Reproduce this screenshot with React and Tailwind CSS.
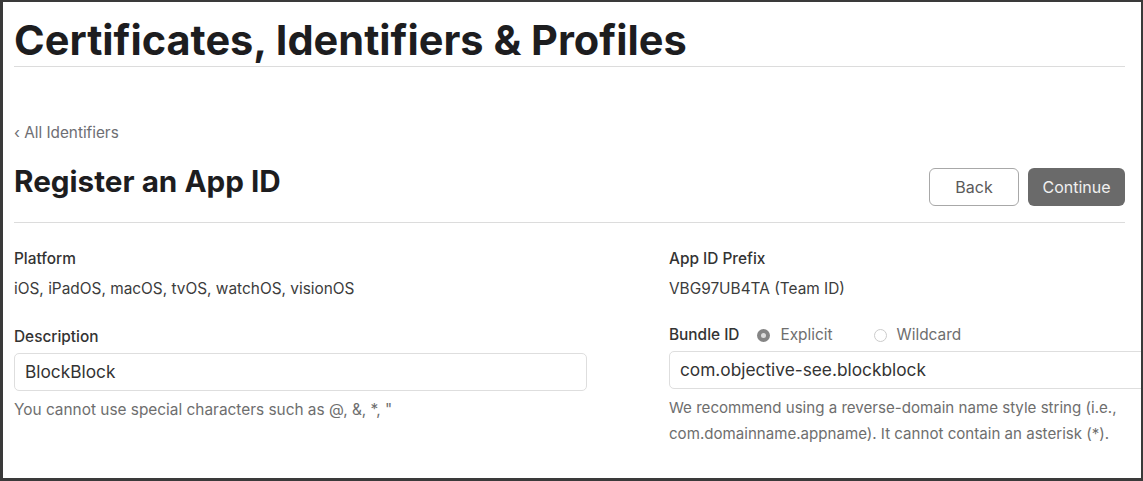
export default function App() {
  return (
    <div className="w-[1143px] h-[481px] bg-white overflow-hidden" style={{ fontFamily: "Inter, 'Noto Sans', sans-serif" }}>
      <div className="w-full h-full border-[3px] border-t-2 border-r-2 border-[#3a3a3a] overflow-hidden">
        <div className="w-[1240px] pl-[11px] pt-[14px]">
          <div className="w-[1111px]">
            <h1 className="text-[41.5px] leading-[48px] font-bold text-[#1d1d1f]">
              Certificates, Identifiers &amp; Profiles
            </h1>
            <div className="mt-[2px] border-t border-[#dcdcdc]" />

            <div className="mt-[56px] text-[15.3px] leading-[20px] text-[#6e6e73]">‹ All Identifiers</div>

            <div className="mt-[19px] flex items-start justify-between">
              <h2 className="text-[29.7px] leading-[38px] font-bold text-[#1d1d1f]">Register an App ID</h2>
              <div className="flex gap-[9px] mt-[6px]">
                <button className="w-[90px] h-[38px] rounded-[6px] border border-[#a8a8a8] bg-white text-[16px] text-[#5a5a5a]">
                  Back
                </button>
                <button className="w-[97px] h-[38px] rounded-[6px] bg-[#6a6a6a] text-[16px] text-[#f0f0f0]">
                  Continue
                </button>
              </div>
            </div>
            <div className="mt-[16px] border-t border-[#dcdcdc]" />
          </div>

          <div className="mt-[25px] grid grid-cols-[573px_573px] gap-x-[82px]">
            <div>
              <div className="text-[15.4px] leading-[22px] font-medium text-[#333]">Platform</div>
              <div className="mt-[8px] text-[15.4px] leading-[22px] text-[#3c3c3c]">
                iOS, iPadOS, macOS, tvOS, watchOS, visionOS
              </div>
              <div className="mt-[26px] text-[15.4px] leading-[22px] font-medium text-[#333]">Description</div>
              <div className="mt-[5px] h-[38px] rounded-[5px] border border-[#dedede] px-[10px] flex items-center text-[17.3px] text-[#333]">
                BlockBlock
              </div>
              <div className="mt-[8px] text-[15.4px] leading-[22px] text-[#6e6e6e]">
                You cannot use special characters such as @, &amp;, *, "
              </div>
            </div>

            <div>
              <div className="text-[15.4px] leading-[22px] font-medium text-[#333]">App ID Prefix</div>
              <div className="mt-[8px] text-[15.4px] leading-[22px] text-[#3c3c3c]">VBG97UB4TA (Team ID)</div>
              <div className="mt-[24px] flex items-center text-[15.4px] leading-[22px]">
                <span className="font-medium text-[#333]">Bundle ID</span>
                <span className="ml-[18px] w-[13px] h-[13px] rounded-full bg-[#858585] flex items-center justify-center">
                  <span className="w-[5px] h-[5px] rounded-full bg-[#dcdcdc]" />
                </span>
                <span className="ml-[10px] text-[#6e6e6e]">Explicit</span>
                <span className="ml-[41px] w-[13px] h-[13px] rounded-full border border-[#cccccc] bg-white" />
                <span className="ml-[10px] text-[#6e6e6e]">Wildcard</span>
              </div>
              <div className="mt-[5px] h-[38px] rounded-[5px] border border-[#dedede] px-[10px] flex items-center text-[17.3px] text-[#333]">
                com.objective-see.blockblock
              </div>
              <div className="mt-[6px] text-[15.1px] leading-[26px] text-[#6e6e6e]">
                We recommend using a reverse-domain name style string (i.e.,
                <br />
                com.domainname.appname). It cannot contain an asterisk (*).
              </div>
            </div>
          </div>
        </div>
      </div>
    </div>
  );
}
